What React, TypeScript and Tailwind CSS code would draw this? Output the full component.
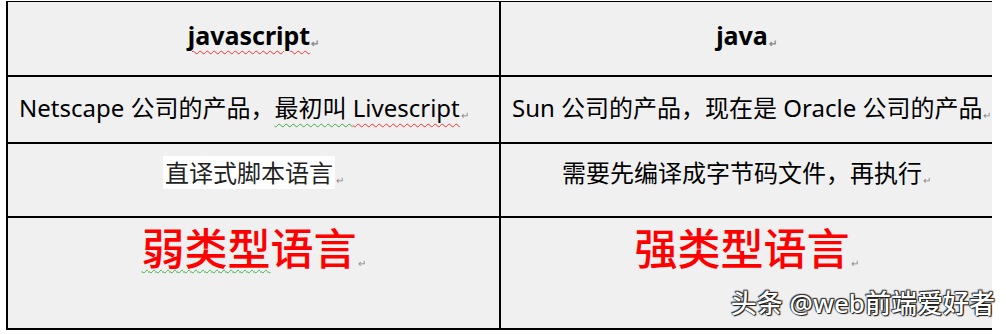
const font = "font-['Noto_Sans','Noto_Sans_CJK_SC',sans-serif]";

function Mark() {
  return <span className="ml-[1px] align-[-2px] text-[10px] leading-none text-[#8a8a8a]">↵</span>;
}

export default function App() {
  return (
    <div className={`relative h-[334px] w-[1006px] bg-white pt-[1px] ${font} text-black`}>
      <div className="grid w-[986px] ml-[6px] grid-cols-[493px_491px] border-t border-l-2 border-black bg-[#f0f0f0]">
        {/* header row */}
        <div className="flex h-[75px] justify-center border-r-2 border-b-2 border-black pt-[17px] text-[25px] leading-[32px] font-bold">
          <span>
            <span className="underline decoration-wavy decoration-[#ff3030] decoration-1 underline-offset-[5px]">javascript</span>
            <Mark />
          </span>
        </div>
        <div className="flex h-[75px] justify-center border-b-2 border-black pt-[17px] text-[25px] leading-[32px] font-bold">
          <span>
            java
            <Mark />
          </span>
        </div>

        {/* origin row */}
        <div className="flex h-[67px] border-r-2 border-b-2 border-black pl-[11px] pt-[15px] text-[24px] leading-[32px] whitespace-nowrap">
          <span>
            Netscape 公司的产品，
            <span className="underline decoration-wavy decoration-[#3cb043] decoration-1 underline-offset-[6px]">最初叫 </span>
            <span className="underline decoration-wavy decoration-[#ff3030] decoration-1 underline-offset-[6px]">Livescript</span>
            <Mark />
          </span>
        </div>
        <div className="flex h-[67px] border-b-2 border-black pl-[11px] pt-[15px] text-[24px] leading-[32px] whitespace-nowrap">
          <span>
            Sun 公司的产品，现在是 Oracle 公司的产品
            <Mark />
          </span>
        </div>

        {/* execution row */}
        <div className="flex h-[74px] justify-center border-r-2 border-b-2 border-black pt-[12px] text-[24px] leading-[33px] text-[#222]">
          <span>
            <span className="bg-white px-[2px]">直译式脚本语言</span>
            <Mark />
          </span>
        </div>
        <div className="flex h-[74px] justify-center border-b-2 border-black pt-[12px] text-[24px] leading-[33px]">
          <span>
            需要先编译成字节码文件，再执行
            <Mark />
          </span>
        </div>

        {/* typing row */}
        <div className="flex h-[112px] justify-center border-r-2 border-b-2 border-black pt-[3px] text-[43px] leading-[56px] font-medium text-[#ff0000]">
          <span>
            <span className="underline decoration-wavy decoration-[#3cb043] decoration-1 underline-offset-[4px]">弱类型</span>
            语言
            <Mark />
          </span>
        </div>
        <div className="flex h-[112px] justify-center border-b-2 border-black pt-[3px] text-[43px] leading-[56px] font-medium text-[#ff0000]">
          <span>
            强类型语言
            <Mark />
          </span>
        </div>
      </div>

      <div className="absolute right-[11px] top-[287px] text-[26px] leading-[32px] font-medium text-white whitespace-nowrap [text-shadow:0_0_1px_#000,1px_1px_1px_#111,-1px_-1px_1px_#333,1px_-1px_1px_#333]">
        头条 @web前端爱好者
      </div>
    </div>
  );
}
